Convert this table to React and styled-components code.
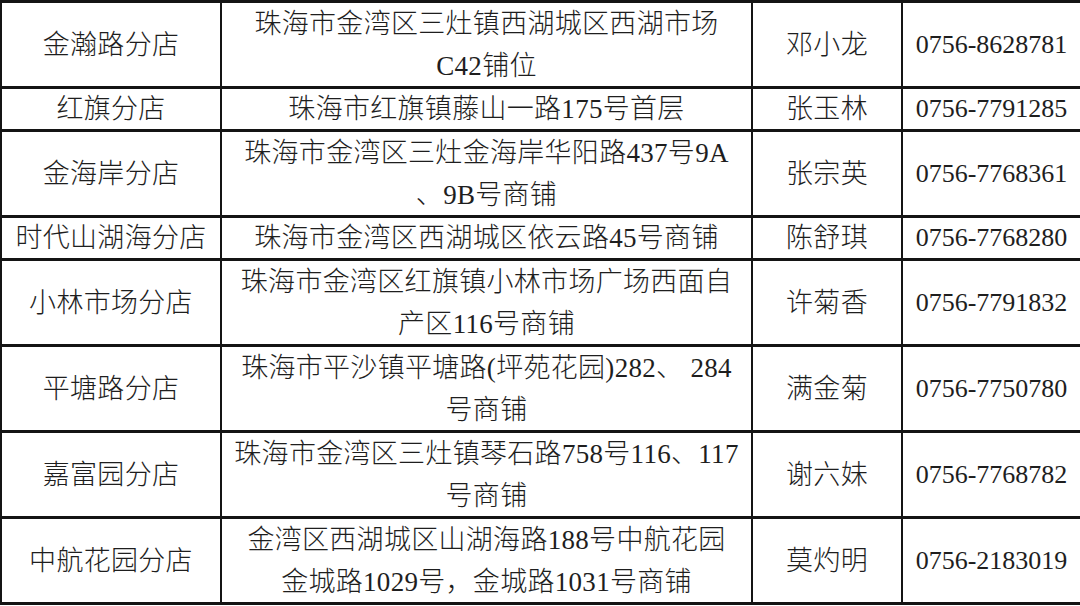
import React from "react";
import styled, { createGlobalStyle } from "styled-components";

const GlobalStyle = createGlobalStyle`
  html, body {
    margin: 0;
    padding: 0;
    background: #ffffff;
  }
  body {
    font-family: "Liberation Serif", "Noto Sans CJK SC", serif;
    color: #1e1e1e;
  }
`;

const Table = styled.table`
  width: 1080px;
  border-collapse: collapse;
  table-layout: fixed;
  font-size: 27px;
  font-weight: 300;
  letter-spacing: 0.3px;
`;

const Col = styled.col`
  width: ${(props) => props.$width}px;
`;

const Cell = styled.td`
  border-style: solid;
  border-color: #141414;
  border-width: 3px 2.5px;
  padding: 0;
  text-align: center;
  vertical-align: middle;
  white-space: nowrap;
  line-height: 40px;
  font-size: ${(props) => (props.$phone ? "26px" : "inherit")};
  letter-spacing: ${(props) => (props.$phone ? "0" : "inherit")};
`;

const Line = styled.div`
  height: ${(props) => (props.$single ? 40 : 41.5)}px;
  line-height: ${(props) => (props.$single ? 40 : 43)}px;
`;

const stores = [
  {
    name: "金瀚路分店",
    address: ["珠海市金湾区三灶镇西湖城区西湖市场", "C42铺位"],
    person: "邓小龙",
    phone: "0756-8628781",
  },
  {
    name: "红旗分店",
    address: ["珠海市红旗镇藤山一路175号首层"],
    person: "张玉林",
    phone: "0756-7791285",
  },
  {
    name: "金海岸分店",
    address: ["珠海市金湾区三灶金海岸华阳路437号9A", "、9B号商铺"],
    person: "张宗英",
    phone: "0756-7768361",
  },
  {
    name: "时代山湖海分店",
    address: ["珠海市金湾区西湖城区依云路45号商铺"],
    person: "陈舒琪",
    phone: "0756-7768280",
  },
  {
    name: "小林市场分店",
    address: ["珠海市金湾区红旗镇小林市场广场西面自", "产区116号商铺"],
    person: "许菊香",
    phone: "0756-7791832",
  },
  {
    name: "平塘路分店",
    address: ["珠海市平沙镇平塘路(坪苑花园)282、 284", "号商铺"],
    person: "满金菊",
    phone: "0756-7750780",
  },
  {
    name: "嘉富园分店",
    address: ["珠海市金湾区三灶镇琴石路758号116、117", "号商铺"],
    person: "谢六妹",
    phone: "0756-7768782",
  },
  {
    name: "中航花园分店",
    address: ["金湾区西湖城区山湖海路188号中航花园", "金城路1029号，金城路1031号商铺"],
    person: "莫灼明",
    phone: "0756-2183019",
  },
];

const App = () => {
  return (
    <>
      <GlobalStyle />
      <Table>
        <colgroup>
          <Col $width={220} />
          <Col $width={531} />
          <Col $width={150} />
          <Col $width={179} />
        </colgroup>
        <tbody>
          {stores.map((store) => (
            <tr key={store.name}>
              <Cell>{store.name}</Cell>
              <Cell>
                {store.address.map((line) => (
                  <Line key={line} $single={store.address.length === 1}>
                    {line}
                  </Line>
                ))}
              </Cell>
              <Cell>{store.person}</Cell>
              <Cell $phone>{store.phone}</Cell>
            </tr>
          ))}
        </tbody>
      </Table>
    </>
  );
};

export default App;
